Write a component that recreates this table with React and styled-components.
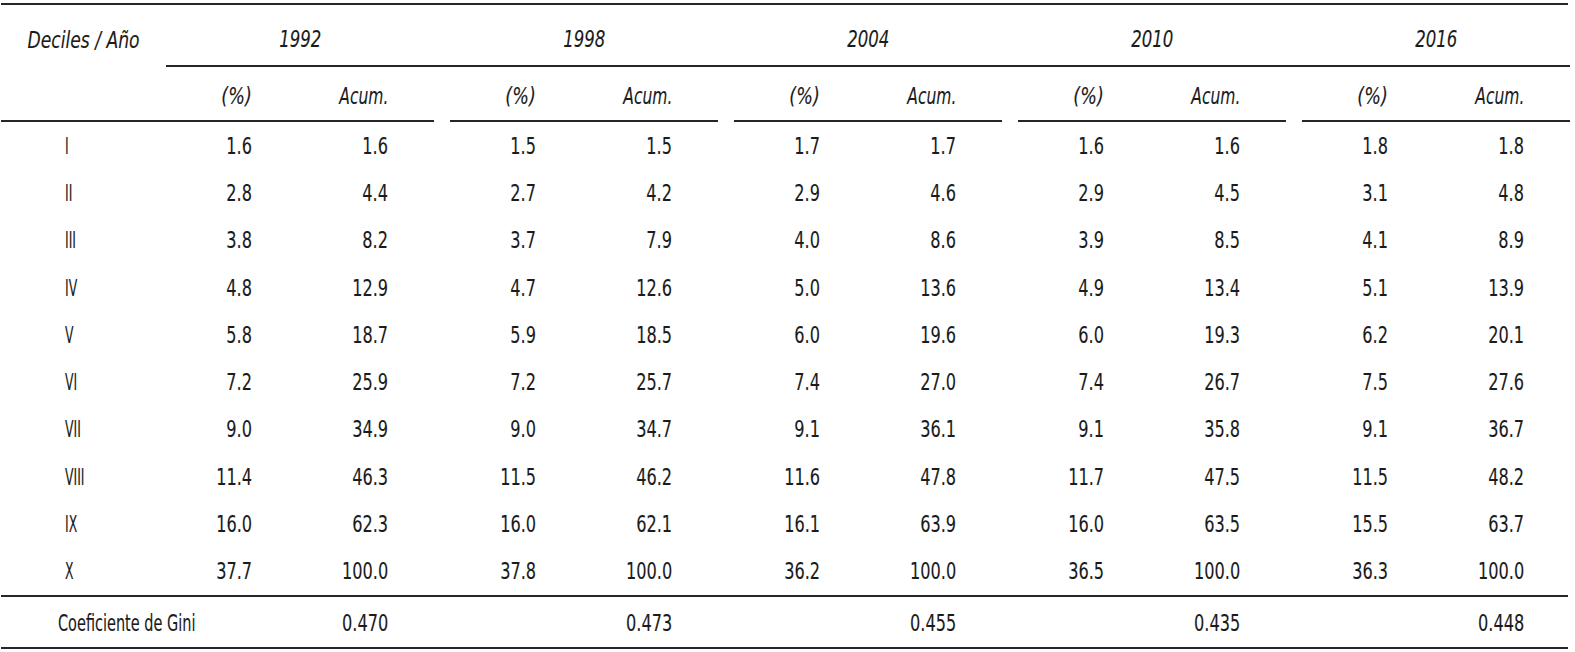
import React from 'react';
import styled, { createGlobalStyle, css } from 'styled-components';

const GlobalStyle = createGlobalStyle`
  html, body {
    margin: 0;
    padding: 0;
    background: #fff;
  }
  body {
    font-family: "DejaVu Sans Condensed", "DejaVu Sans", sans-serif;
    font-stretch: condensed;
    color: #1b1b1b;
  }
`;

const line = '2px solid #262626';

const Table = styled.div`
  display: flex;
  flex-direction: column;
  width: 1567px;
  margin-left: 1px;
  margin-top: 3px;
  border-top: ${line};
  font-size: 23px;
`;

const Row = styled.div`
  display: grid;
  grid-template-columns: 165px repeat(4, 284px) 268px;
  align-items: center;
  height: ${({ h }) => h}px;
  ${({ ruled }) => ruled && css`
    border-bottom: ${line};
  `}
`;

const Stub = styled.div`
  align-self: stretch;
  display: flex;
  align-items: center;
  justify-content: ${({ center }) => (center ? 'center' : 'flex-start')};
  padding-left: ${({ pad }) => pad || 0}px;
  padding-top: ${({ top }) => top || 0}px;
  font-style: ${({ italic }) => (italic ? 'italic' : 'normal')};
  white-space: nowrap;
  ${({ ruled }) => ruled && css`
    border-bottom: ${line};
  `}
`;

const YearCell = styled.div`
  align-self: stretch;
  display: flex;
  align-items: center;
  justify-content: center;
  padding-right: ${({ last }) => (last ? 0 : 16)}px;
  padding-top: 7px;
  font-style: italic;
  border-bottom: ${line};
`;

const Group = styled.div`
  align-self: stretch;
  display: grid;
  grid-template-columns: 86px 136px;
  align-items: center;
  width: 268px;
  padding-top: ${({ top }) => top || 0}px;
  box-sizing: border-box;
  font-style: ${({ italic }) => (italic ? 'italic' : 'normal')};
  ${({ ruled }) => ruled && css`
    border-bottom: ${line};
  `}
`;

const Num = styled.span`
  text-align: right;
`;

/* the reference face is a tall condensed grotesque; squeeze the installed one */
const Text = styled.span`
  display: inline-block;
  white-space: nowrap;
  -webkit-text-stroke: 0.12px currentColor;
  transform: scaleX(${({ sx }) => sx || 0.78});
  transform-origin: ${({ origin }) => origin || 'right'} center;
`;

const years = ['1992', '1998', '2004', '2010', '2016'];

const rows = [
  ['I', [1.6, 1.6], [1.5, 1.5], [1.7, 1.7], [1.6, 1.6], [1.8, 1.8]],
  ['II', [2.8, 4.4], [2.7, 4.2], [2.9, 4.6], [2.9, 4.5], [3.1, 4.8]],
  ['III', [3.8, 8.2], [3.7, 7.9], [4.0, 8.6], [3.9, 8.5], [4.1, 8.9]],
  ['IV', [4.8, 12.9], [4.7, 12.6], [5.0, 13.6], [4.9, 13.4], [5.1, 13.9]],
  ['V', [5.8, 18.7], [5.9, 18.5], [6.0, 19.6], [6.0, 19.3], [6.2, 20.1]],
  ['VI', [7.2, 25.9], [7.2, 25.7], [7.4, 27.0], [7.4, 26.7], [7.5, 27.6]],
  ['VII', [9.0, 34.9], [9.0, 34.7], [9.1, 36.1], [9.1, 35.8], [9.1, 36.7]],
  ['VIII', [11.4, 46.3], [11.5, 46.2], [11.6, 47.8], [11.7, 47.5], [11.5, 48.2]],
  ['IX', [16.0, 62.3], [16.0, 62.1], [16.1, 63.9], [16.0, 63.5], [15.5, 63.7]],
  ['X', [37.7, 100.0], [37.8, 100.0], [36.2, 100.0], [36.5, 100.0], [36.3, 100.0]],
];

const gini = ['0.470', '0.473', '0.455', '0.435', '0.448'];

export default function App() {
  return (
    <>
      <GlobalStyle />
      <Table>
        <Row h={62}>
          <Stub center italic top={7}>
            <Text sx={0.83} origin="center">Deciles / Año</Text>
          </Stub>
          {years.map((y, i) => (
            <YearCell key={y} last={i === years.length - 1}>
              <Text sx={0.8} origin="center">{y}</Text>
            </YearCell>
          ))}
        </Row>
        <Row h={55}>
          <Stub ruled />
          {years.map((y) => (
            <Group key={y} ruled italic top={4}>
              <Num><Text sx={0.85}>(%)</Text></Num>
              <Num><Text sx={0.75}>Acum.</Text></Num>
            </Group>
          ))}
        </Row>
        {rows.map(([label, ...groups], idx) => (
          <Row key={label} h={47.3} ruled={idx === rows.length - 1}>
            <Stub pad={64}>
              <Text sx={0.6} origin="left">{label}</Text>
            </Stub>
            {groups.map((g, i) => (
              <Group key={i}>
                <Num><Text>{g[0].toFixed(1)}</Text></Num>
                <Num><Text>{g[1].toFixed(1)}</Text></Num>
              </Group>
            ))}
          </Row>
        ))}
        <Row h={50} ruled>
          <Stub pad={57} top={3}>
            <Text sx={0.7} origin="left">Coeficiente de Gini</Text>
          </Stub>
          {gini.map((v) => (
            <Group key={v} top={3}>
              <span />
              <Num><Text>{v}</Text></Num>
            </Group>
          ))}
        </Row>
      </Table>
    </>
  );
}
